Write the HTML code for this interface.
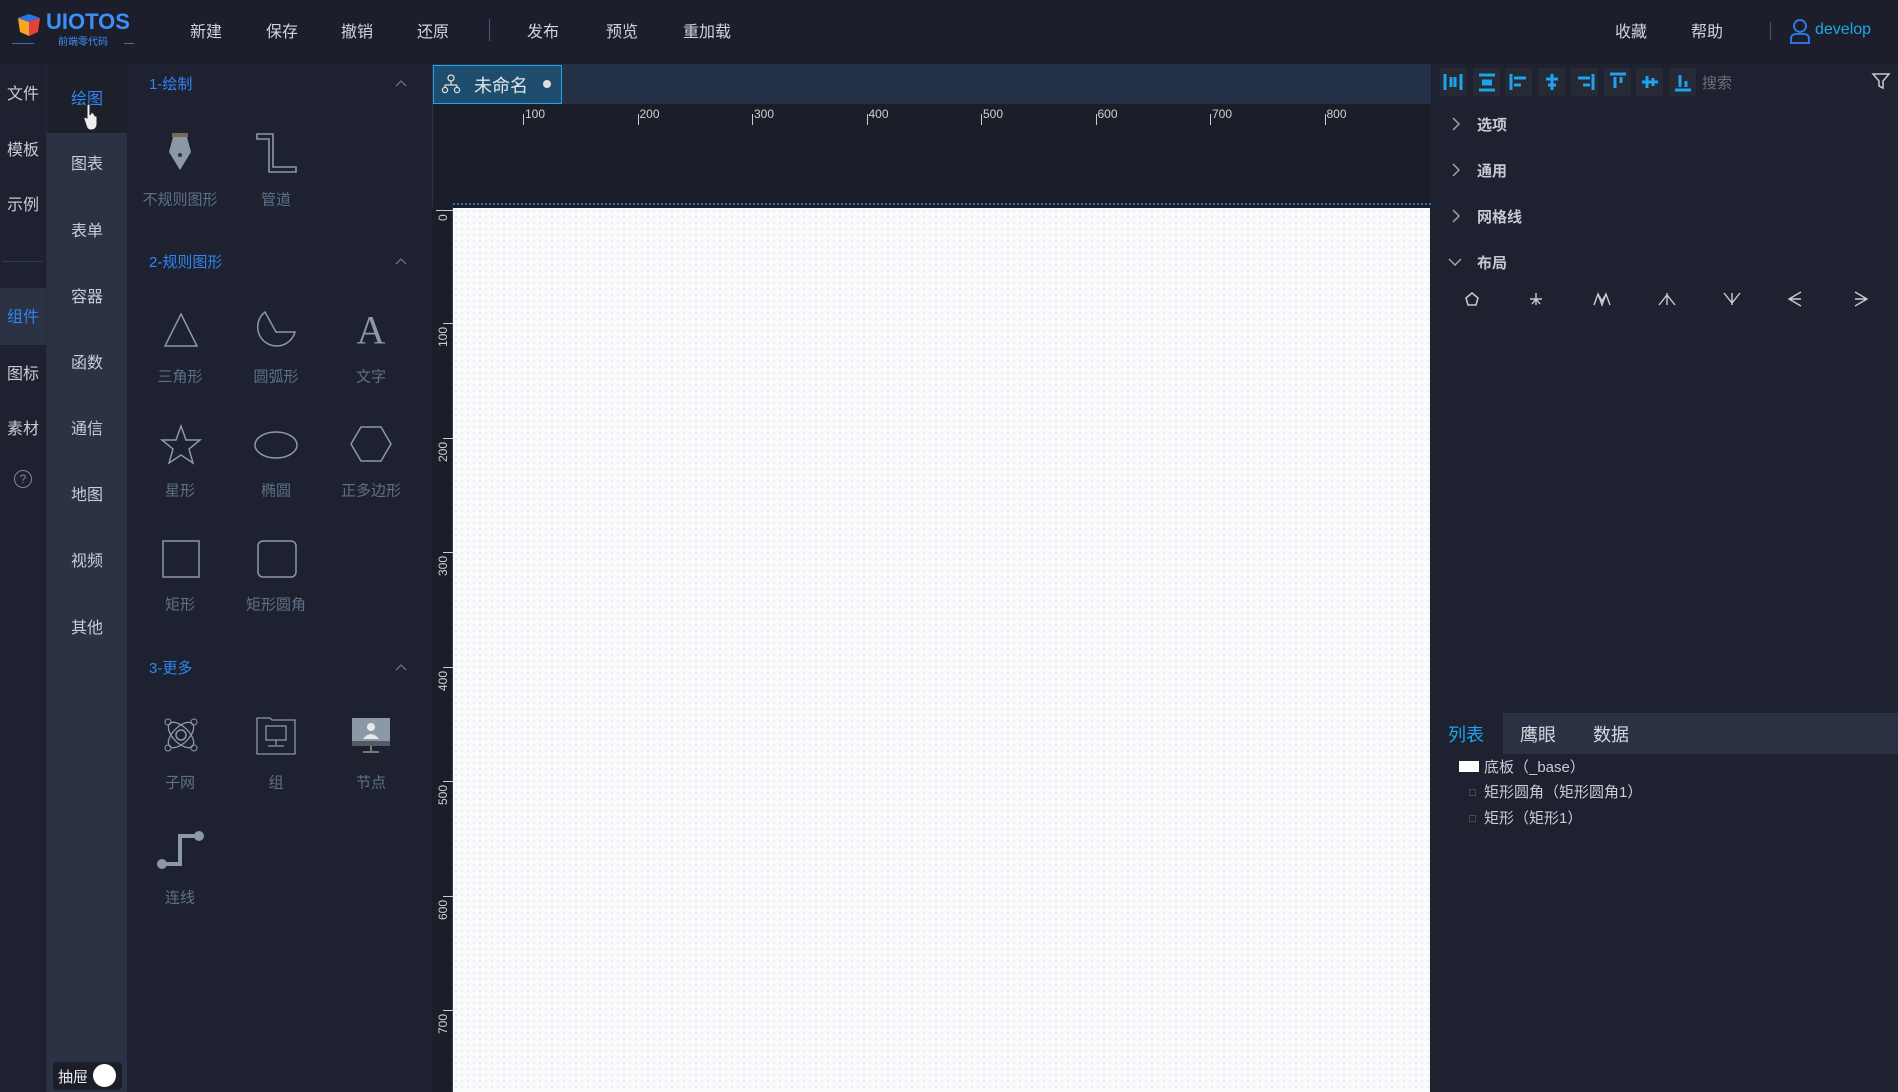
<!DOCTYPE html>
<html><head><meta charset="utf-8"><style>
*{margin:0;padding:0;box-sizing:border-box}
body{width:1898px;height:1092px;overflow:hidden;background:#1d202b;font-family:"Liberation Sans","Noto Sans CJK SC",sans-serif;position:relative;color:#c8ccd4}
.a{position:absolute;white-space:nowrap}
.c{transform:translate(-50%,-50%)}
.menu{font-size:16px;color:#d0d3d9}
.c1{font-size:16px;color:#c8ccd4}
.c2{font-size:16px;color:#c8ccd4}
.sec{font-size:15px;color:#2f86f0}
.lbl{font-size:15px;color:#5d7188}
.rl{font-size:12px;color:#d0d0d0}
.acc{font-size:15px;font-weight:bold;color:#c4c9d2}
svg{position:absolute;overflow:visible}
</style></head><body>
<div class="a" style="left:0;top:0;width:1898px;height:64px;background:#1c1f2b"></div>
<svg style="left:16px;top:12px" width="26" height="26" viewBox="0 0 26 26"><path d="M2 6 L13 2 L24 6 L13 10Z" fill="#2f6fe0"/><path d="M2 6 L13 10 L13 24 L4 20Z" fill="#f5a623"/><path d="M13 10 L24 6 L22 20 L13 24Z" fill="#e8413a"/></svg>
<div class="a" style="left:46px;top:9px;font-size:22px;font-weight:bold;color:#3d8ff5">UIOTOS</div>
<div class="a" style="left:58px;top:33px;font-size:10px;color:#3d8ff5">前端零代码</div>
<div class="a" style="left:12px;top:43px;width:22px;height:1px;background:#3d6fb0"></div>
<div class="a" style="left:124px;top:43px;width:10px;height:1px;background:#3d6fb0"></div>
<div class="a menu c" style="left:206px;top:30px">新建</div>
<div class="a menu c" style="left:282px;top:30px">保存</div>
<div class="a menu c" style="left:357px;top:30px">撤销</div>
<div class="a menu c" style="left:433px;top:30px">还原</div>
<div class="a" style="left:489px;top:19px;width:1px;height:22px;background:#3b5a86"></div>
<div class="a menu c" style="left:543px;top:30px">发布</div>
<div class="a menu c" style="left:622px;top:30px">预览</div>
<div class="a menu c" style="left:707px;top:30px">重加载</div>
<div class="a menu c" style="left:1631px;top:30px">收藏</div>
<div class="a menu c" style="left:1707px;top:30px">帮助</div>
<div class="a" style="left:1770px;top:22px;width:1px;height:18px;background:#3b5a86"></div>
<svg style="left:1789px;top:18px" width="22" height="26" viewBox="0 0 22 26"><circle cx="11" cy="8" r="6" fill="none" stroke="#2f7ff0" stroke-width="1.8"/><path d="M2 25 V21 Q2 16 7 16 H15 Q20 16 20 21 V25Z" fill="none" stroke="#2f7ff0" stroke-width="1.8"/></svg>
<div class="a" style="left:1815px;top:21px;font-size:16px;color:#1ea7e8">develop</div>

<div class="a" style="left:0;top:64px;width:46px;height:1028px;background:#1e2230"></div>
<div class="a" style="left:0;top:288px;width:46px;height:57px;background:#2a3244"></div>
<div class="a" style="left:2px;top:261px;width:40px;height:1px;background:#2f3d55"></div>
<div class="a c1 c" style="left:23px;top:92px">文件</div>
<div class="a c1 c" style="left:23px;top:148px">模板</div>
<div class="a c1 c" style="left:23px;top:203px">示例</div>
<div class="a c1 c" style="left:23px;top:315px;color:#2f86f0">组件</div>
<div class="a c1 c" style="left:23px;top:372px">图标</div>
<div class="a c1 c" style="left:23px;top:427px">素材</div>
<div class="a c" style="left:23px;top:479px;width:18px;height:18px;border:1px solid #7f8793;border-radius:50%;font-size:12px;color:#7f8793;text-align:center;line-height:16px">?</div>
<div class="a" style="left:46px;top:64px;width:81px;height:1028px;background:#1d202b;border-left:1px solid #262b38"></div>
<div class="a" style="left:47px;top:133px;width:80px;height:959px;background:#2a3244"></div>
<div class="a c2 c" style="left:87px;top:97px;color:#2f86f0">绘图</div>
<svg style="left:83px;top:103px" width="16" height="28" viewBox="0 0 16 28"><path d="M4 2 Q6 0 7 2 V12 L8 10 Q10 9 11 11 L12 13 Q14 12 14 15 V22 Q13 27 8 27 Q4 27 3 22 L1 16 Q1 13 4 15Z" fill="#eee" stroke="#222" stroke-width="1"/></svg>
<div class="a c2 c" style="left:87px;top:162px">图表</div>
<div class="a c2 c" style="left:87px;top:229px">表单</div>
<div class="a c2 c" style="left:87px;top:295px">容器</div>
<div class="a c2 c" style="left:87px;top:361px">函数</div>
<div class="a c2 c" style="left:87px;top:427px">通信</div>
<div class="a c2 c" style="left:87px;top:493px">地图</div>
<div class="a c2 c" style="left:87px;top:559px">视频</div>
<div class="a c2 c" style="left:87px;top:626px">其他</div>
<div class="a" style="left:53px;top:1062px;width:69px;height:28px;background:#1b1e28;border-radius:4px"></div>
<div class="a" style="left:58px;top:1066px;font-size:15px;color:#e8e8e8">抽屉</div>
<div class="a" style="left:93px;top:1064px;width:23px;height:23px;border-radius:50%;background:#fff"></div>

<div class="a" style="left:127px;top:64px;width:305px;height:1028px;background:#1e2130"></div>
<div class="a sec" style="left:149px;top:73px">1-绘制</div>
<div class="a sec" style="left:149px;top:251px">2-规则图形</div>
<div class="a sec" style="left:149px;top:657px">3-更多</div>
<svg style="left:395px;top:79px" width="12" height="8"><path d="M1 7 L6 2 L11 7" fill="none" stroke="#6b7280" stroke-width="1.3"/></svg>
<svg style="left:395px;top:257px" width="12" height="8"><path d="M1 7 L6 2 L11 7" fill="none" stroke="#6b7280" stroke-width="1.3"/></svg>
<svg style="left:395px;top:663px" width="12" height="8"><path d="M1 7 L6 2 L11 7" fill="none" stroke="#6b7280" stroke-width="1.3"/></svg>
<svg style="left:167px;top:133px" width="26" height="38" viewBox="0 0 26 38"><rect x="5" y="0" width="16" height="4" fill="#7a6a55"/><path d="M6 4 H20 L24 19 L13 37 L2 19Z" fill="#8b98a8"/><circle cx="13" cy="22" r="2" fill="#333"/></svg>
<svg style="left:256px;top:133px" width="42" height="40" viewBox="0 0 42 40"><path d="M1 1 H17 V34 H40 V39 H13 V6 H1Z" fill="none" stroke="#8b98a8" stroke-width="1.6"/></svg>
<div class="a lbl c" style="left:180px;top:199px">不规则图形</div>
<div class="a lbl c" style="left:276px;top:199px">管道</div>
<svg style="left:163px;top:312px" width="36" height="36"><path d="M18 2 L34 34 H2Z" fill="none" stroke="#8b98a8" stroke-width="1.5"/></svg>
<svg style="left:254px;top:310px" width="44" height="40"><path d="M11 2 A19 19 0 1 0 41 22 H22Z" fill="none" stroke="#8b98a8" stroke-width="1.5"/></svg>
<div class="a c" style="left:371px;top:330px;font-family:'Liberation Serif',serif;font-size:40px;color:#8b98a8">A</div>
<div class="a lbl c" style="left:180px;top:376px">三角形</div>
<div class="a lbl c" style="left:276px;top:376px">圆弧形</div>
<div class="a lbl c" style="left:371px;top:376px">文字</div>
<svg style="left:160px;top:424px" width="42" height="42"><path d="M21 2 L26 16 L40 16 L29 25 L33 39 L21 31 L9 39 L13 25 L2 16 L16 16Z" fill="none" stroke="#8b98a8" stroke-width="1.5"/></svg>
<svg style="left:253px;top:430px" width="46" height="30"><ellipse cx="23" cy="15" rx="21" ry="13" fill="none" stroke="#8b98a8" stroke-width="1.5"/></svg>
<svg style="left:350px;top:425px" width="42" height="38"><path d="M11 2 H31 L41 19 L31 36 H11 L1 19Z" fill="none" stroke="#8b98a8" stroke-width="1.5"/></svg>
<div class="a lbl c" style="left:180px;top:490px">星形</div>
<div class="a lbl c" style="left:276px;top:490px">椭圆</div>
<div class="a lbl c" style="left:371px;top:490px">正多边形</div>
<svg style="left:162px;top:540px" width="38" height="38"><rect x="1" y="1" width="36" height="36" fill="none" stroke="#8b98a8" stroke-width="1.5"/></svg>
<svg style="left:257px;top:540px" width="40" height="38"><rect x="1" y="1" width="38" height="36" rx="5" fill="none" stroke="#8b98a8" stroke-width="1.5"/></svg>
<div class="a lbl c" style="left:180px;top:604px">矩形</div>
<div class="a lbl c" style="left:276px;top:604px">矩形圆角</div>
<svg style="left:164px;top:718px" width="34" height="34" viewBox="0 0 34 34"><circle cx="17" cy="17" r="5" fill="none" stroke="#8b98a8" stroke-width="1.5"/><ellipse cx="17" cy="17" rx="16" ry="8" transform="rotate(45 17 17)" fill="none" stroke="#8b98a8" stroke-width="1.3"/><ellipse cx="17" cy="17" rx="16" ry="8" transform="rotate(-45 17 17)" fill="none" stroke="#8b98a8" stroke-width="1.3"/><circle cx="4" cy="4" r="3" fill="none" stroke="#8b98a8"/><circle cx="30" cy="4" r="3" fill="none" stroke="#8b98a8"/><circle cx="4" cy="30" r="3" fill="none" stroke="#8b98a8"/><circle cx="30" cy="30" r="3" fill="none" stroke="#8b98a8"/></svg>
<svg style="left:256px;top:717px" width="40" height="38"><path d="M1 1 H14 L16 3 H39 V37 H1Z" fill="none" stroke="#8b98a8" stroke-width="1.3"/><rect x="10" y="9" width="20" height="14" fill="none" stroke="#8b98a8" stroke-width="1.3"/><path d="M20 23 V28 M12 29 H28" stroke="#8b98a8" stroke-width="1.3"/></svg>
<svg style="left:351px;top:717px" width="40" height="38"><rect x="1" y="1" width="38" height="28" fill="#8b98a8"/><rect x="1" y="24" width="38" height="5" fill="#555b66"/><circle cx="20" cy="10" r="4" fill="#e8e8e8"/><path d="M12 22 Q20 12 28 22Z" fill="#e8e8e8"/><path d="M20 29 V34 M12 35 H28" stroke="#777" stroke-width="2"/></svg>
<div class="a lbl c" style="left:180px;top:782px">子网</div>
<div class="a lbl c" style="left:276px;top:782px">组</div>
<div class="a lbl c" style="left:371px;top:782px">节点</div>
<svg style="left:156px;top:829px" width="50" height="42"><path d="M6 35 H24 V7 H43" fill="none" stroke="#8b98a8" stroke-width="4"/><circle cx="6" cy="35" r="5" fill="#8b98a8"/><circle cx="43" cy="7" r="5" fill="#8b98a8"/></svg>
<div class="a lbl c" style="left:180px;top:897px">连线</div>

<div class="a" style="left:432px;top:64px;width:999px;height:1028px;background:#1b1e29;border-left:1px solid #2b3347"></div>
<div class="a" style="left:433px;top:64px;width:998px;height:40px;background:#243045"></div>
<div class="a" style="left:433px;top:65px;width:129px;height:39px;background:#1e4d6e;border:1.5px solid #1fa3ea"></div>
<svg style="left:442px;top:74px" width="18" height="20" viewBox="0 0 18 20"><circle cx="9" cy="4" r="3" fill="none" stroke="#ddd" stroke-width="1.3"/><path d="M9 7 V11 M3 11 H15 M3 11 V13 M15 11 V13" stroke="#ddd" stroke-width="1.3" fill="none"/><circle cx="3" cy="16" r="2.6" fill="none" stroke="#ddd" stroke-width="1.3"/><circle cx="15" cy="16" r="2.6" fill="none" stroke="#ddd" stroke-width="1.3"/></svg>
<div class="a" style="left:474px;top:72px;font-size:18px;color:#e0e4ea">未命名</div>
<div class="a" style="left:543px;top:80px;width:8px;height:8px;border-radius:50%;background:#ddd"></div>
<div class="a" style="left:453px;top:203px;width:978px;border-top:2px dotted #2d6fbf"></div>
<div class="a" style="left:432px;top:207px;width:21px;height:885px;background:#1b1e29;border-right:1px solid #3a4050"></div>
<div class="a" style="left:453px;top:208px;width:977px;height:884px;background:#fafbfc;background-image:radial-gradient(#e3e6ea 0.8px,transparent 0.9px);background-size:6px 6px"></div>
<div id="rh"></div>
<script>
var h='';
for(var k=0;k<8;k++){var x=523+k*114.5;h+='<div class="a" style="left:'+x+'px;top:114px;width:1px;height:11px;background:#ccc"></div><div class="a rl" style="left:'+(x+2)+'px;top:107px">'+((k+1)*100)+'</div>';}
for(var k=0;k<7;k++){var y=323+k*114.5;h+='<div class="a" style="left:443px;top:'+y+'px;width:10px;height:1px;background:#ccc"></div><div class="a rl" style="left:436px;top:'+(y+24)+'px;transform:rotate(-90deg);transform-origin:0 0">'+((k+1)*100)+'</div>';}
h+='<div class="a rl" style="left:436px;top:221px;transform:rotate(-90deg);transform-origin:0 0">0</div><div class="a" style="left:436px;top:210px;width:17px;height:1px;background:#ccc"></div>';
document.getElementById('rh').innerHTML=h;
</script>

<div class="a" style="left:1431px;top:64px;width:467px;height:1028px;background:#1e2130"></div>
<div id="tb"></div>
<script>
var t='';var s=['M2 3V19 M8 6V16 M12 6V16 M18 3V19','M3 4H19 M6 10H16 M6 13H16 M3 19H19','M3 3V19 M6 7H18 M6 14H13','M11 3V19 M5 8H17 M7 14H15','M19 3V19 M4 7H16 M9 14H16','M3 3H19 M8 6V17 M14 6V12','M3 11H19 M8 5V17 M14 7V15','M3 19H19 M8 4V16 M14 10V16'];
for(var i=0;i<8;i++){var x=1440+i*32.7;t+='<div class="a" style="left:'+x+'px;top:68px;width:27px;height:28px;background:#262a36"></div><svg style="left:'+(x+3)+'px;top:71px" width="22" height="22" viewBox="0 0 22 22"><path d="'+s[i]+'" stroke="#1fa3ea" stroke-width="3" fill="none"/></svg>';}
document.getElementById('tb').innerHTML=t;
</script>
<div class="a" style="left:1702px;top:72px;font-size:15px;color:#6a6f7a">搜索</div>
<svg style="left:1872px;top:72px" width="18" height="18"><path d="M1 2 H17 L11 9 V16 L7 14 V9Z" fill="none" stroke="#ccc" stroke-width="1.5"/></svg>
<svg style="left:1451px;top:117px" width="10" height="14"><path d="M2 1 L8 7 L2 13" fill="none" stroke="#aaa" stroke-width="1.4"/></svg>
<svg style="left:1451px;top:163px" width="10" height="14"><path d="M2 1 L8 7 L2 13" fill="none" stroke="#aaa" stroke-width="1.4"/></svg>
<svg style="left:1451px;top:209px" width="10" height="14"><path d="M2 1 L8 7 L2 13" fill="none" stroke="#aaa" stroke-width="1.4"/></svg>
<svg style="left:1448px;top:257px" width="14" height="10"><path d="M1 2 L7 8 L13 2" fill="none" stroke="#aaa" stroke-width="1.4"/></svg>
<div class="a acc" style="left:1477px;top:114px">选项</div>
<div class="a acc" style="left:1477px;top:160px">通用</div>
<div class="a acc" style="left:1477px;top:206px">网格线</div>
<div class="a acc" style="left:1477px;top:252px">布局</div>
<svg style="left:1464px;top:291px" width="16" height="16"><path d="M8 2 L14 7 L12 14 H4 L2 7Z" fill="none" stroke="#ccc" stroke-width="1.5"/></svg>
<svg style="left:1528px;top:291px" width="16" height="16"><path d="M8 2 V14 M2 8 H14 M4 13 L8 8 L12 13" stroke="#ccc" stroke-width="1.4" fill="none"/></svg>
<svg style="left:1593px;top:291px" width="18" height="16"><path d="M1 14 L5 3 L9 14 L13 3 L17 14 M5 3 L9 10 L13 3" stroke="#ccc" stroke-width="1.4" fill="none"/></svg>
<svg style="left:1658px;top:291px" width="18" height="16"><path d="M9 2 V14 M1 14 L9 4 L17 14" stroke="#ccc" stroke-width="1.4" fill="none"/></svg>
<svg style="left:1723px;top:291px" width="18" height="16"><path d="M9 2 V14 M1 2 L9 12 L17 2" stroke="#ccc" stroke-width="1.4" fill="none"/></svg>
<svg style="left:1787px;top:291px" width="16" height="16"><path d="M2 8 H14 M14 1 L2 8 L14 15" stroke="#ccc" stroke-width="1.4" fill="none"/></svg>
<svg style="left:1853px;top:291px" width="16" height="16"><path d="M2 8 H14 M2 1 L14 8 L2 15" stroke="#ccc" stroke-width="1.4" fill="none"/></svg>
<div class="a" style="left:1431px;top:713px;width:467px;height:41px;background:#2a3243"></div>
<div class="a" style="left:1431px;top:713px;width:72px;height:41px;background:#1e2130"></div>
<div class="a" style="left:1448px;top:721px;font-size:18px;color:#1fa3ea">列表</div>
<div class="a" style="left:1520px;top:721px;font-size:18px;color:#d5d8de">鹰眼</div>
<div class="a" style="left:1593px;top:721px;font-size:18px;color:#d5d8de">数据</div>
<div class="a" style="left:1459px;top:761px;width:20px;height:11px;background:#fff"></div>
<div class="a" style="left:1484px;top:756px;font-size:15px;color:#c8ccd4">底板（_base）</div>
<div class="a" style="left:1469px;top:789px;width:7px;height:7px;border:1px solid #444a55"></div>
<div class="a" style="left:1484px;top:781px;font-size:15px;color:#c8ccd4">矩形圆角（矩形圆角1）</div>
<div class="a" style="left:1469px;top:815px;width:7px;height:7px;border:1px solid #3f5040"></div>
<div class="a" style="left:1484px;top:807px;font-size:15px;color:#c8ccd4">矩形（矩形1）</div>
</body></html>
